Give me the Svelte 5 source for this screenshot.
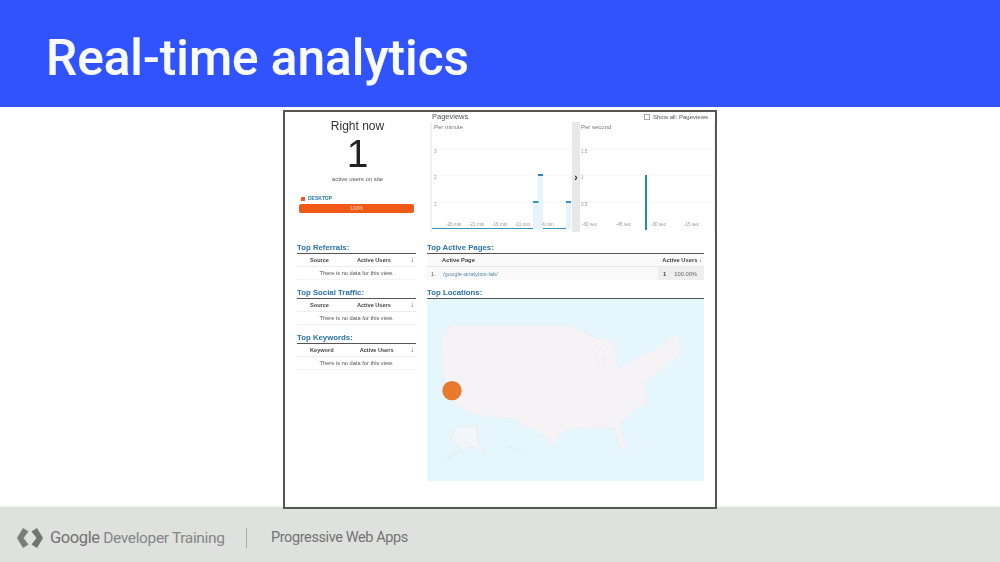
<script>
  const tables = [
    { title: 'Top Referrals:', col: 'Source', gap: 28 },
    { title: 'Top Social Traffic:', col: 'Source', gap: 28 },
    { title: 'Top Keywords:', col: 'Keyword', gap: 26 }
  ];
  const minuteGrid = [{ y: 27, l: '3' }, { y: 53, l: '2' }, { y: 80, l: '1' }];
  const minuteTicks = [[14, '-26 min'], [37, '-21 min'], [60, '-16 min'], [83, '-11 min'], [109, '-6 min']];
  const secondGrid = [{ y: 27, l: '1.5' }, { y: 53, l: '1' }, { y: 80, l: '0.5' }];
  const secondTicks = [[2, '-60 sec'], [36, '-45 sec'], [71, '-30 sec'], [104, '-15 sec']];
</script>

<div class="slide">
  <header class="banner"><h1>Real-time analytics</h1></header>

  <main class="stage">
    <div class="shot">
      <section class="top">
        <div class="now">
          <div class="now-title">Right now</div>
          <div class="now-count">1</div>
          <div class="now-sub">active users on site</div>
          <div class="device"><i></i>DESKTOP</div>
          <div class="bar">100%</div>
        </div>
        <div class="views">
          <div class="views-head">
            <span>Pageviews</span>
            <span class="show"><i></i>Show all: Pageviews</span>
          </div>
          <div class="charts">
            <svg class="minute" viewBox="0 0 140 110">
              <rect width="140" height="110" fill="#fff" />
              <text x="2" y="7" class="cap">Per minute</text>
              {#each minuteGrid as g}
                <line x1="0" x2="140" y1={g.y} y2={g.y} stroke="#f0f0f0" stroke-width="0.7" />
                <text x="2" y={g.y + 4} class="tick">{g.l}</text>
              {/each}
              <rect x="101" y="80" width="5" height="27" fill="#e6f4fb" />
              <rect x="106" y="53" width="5" height="54" fill="#e6f4fb" />
              <rect x="134" y="80" width="5" height="27" fill="#e6f4fb" />
              <rect x="101" y="79" width="5.500" height="2" fill="#3a93bd" />
              <rect x="106" y="52" width="5" height="2" fill="#2c86b2" />
              <rect x="134" y="79" width="5" height="2" fill="#3a93bd" />
              <rect x="0" y="106" width="101" height="1" fill="#3a93bd" />
              <rect x="111" y="106" width="23" height="1" fill="#3a93bd" />
              {#each minuteTicks as [x, l]}
                <text x={x} y="104" class="tick">{l}</text>
              {/each}
            </svg>
            <div class="divider"><span>›</span></div>
            <svg class="second" viewBox="0 0 134 110">
              <rect width="134" height="110" fill="#fff" />
              <text x="1" y="7" class="cap">Per second</text>
              {#each secondGrid as g}
                <line x1="0" x2="134" y1={g.y} y2={g.y} stroke="#f0f0f0" stroke-width="0.7" />
                <text x="1" y={g.y + 4} class="tick">{g.l}</text>
              {/each}
              <rect x="65" y="53" width="2" height="55" fill="#1f8f9d" />
              {#each secondTicks as [x, l]}
                <text x={x} y="104" class="tick">{l}</text>
              {/each}
            </svg>
          </div>
        </div>
      </section>

      <section class="bottom">
        <div class="left">
          {#each tables as t}
            <div class="tbl">
              <h2>{t.title}</h2>
              <div class="tbl-head">
                <span>{t.col}</span>
                <span style="margin-left: {t.gap}px">Active Users</span>
                <span class="arrow">↓</span>
              </div>
              <div class="tbl-empty">There is no data for this view.</div>
            </div>
          {/each}
        </div>
        <div class="right">
          <h2>Top Active Pages:</h2>
          <div class="pages-head">
            <span>Active Page</span>
            <span>Active Users ↓</span>
          </div>
          <div class="pages-row">
            <span class="idx">1.</span>
            <span class="link">/google-analytics-lab/</span>
            <span class="val"><b>1</b>100.00%</span>
          </div>
          <h2 class="loc">Top Locations:</h2>
          <svg class="map" viewBox="6 9 831 546">
            <rect x="6" y="9" width="831" height="546" fill="#e6f6fd" />
            <path
              d="M72 88 L430 88 L470 105 L510 125 L555 130 L575 165 L580 215 L620 195 L660 175 L700 160 L730 130 L760 115 L768 165 L730 205 L690 240 L655 260 L665 320 L620 345 L585 385 L606 460 L590 462 L570 395 L500 395 L430 400 L395 420 L385 450 L360 425 L330 395 L300 400 L280 370 L210 365 L130 350 L80 310 L55 240 L50 130 Z"
              fill="#f6f3f6" stroke="#eceef2" stroke-width="2" stroke-linejoin="round"
            />
            <path d="M530 150 L514 180 L518 205 L534 218 L540 170 M470 105 L510 125" fill="none" stroke="#e4e8ec" stroke-width="2" />
            <path
              d="M95 395 L155 385 L160 445 L185 475 L140 450 L100 470 L60 490 L110 460 L75 430 Z"
              fill="#f2f5f9" stroke="#e2e8ec" stroke-width="2" stroke-linejoin="round"
            />
            <path d="M240 450 L285 462 L330 495" fill="none" stroke="#e0eef4" stroke-width="2" />
            <circle cx="81" cy="284" r="29" fill="#e9792d" />
          </svg>
        </div>
      </section>
    </div>
  </main>

  <footer class="foot">
    <svg class="logo" viewBox="0 0 26 20">
      <path d="M0 10 L6 0 L11.500 3.500 L6.500 10 L11.500 16.500 L6 20 Z" fill="#7b7d7b" />
      <path d="M26 10 L20 0 L14.500 3.500 L19.500 10 L14.500 16.500 L20 20 Z" fill="#737573" />
    </svg>
    <span class="brand"><span class="g">Google</span> Developer Training</span>
    <span class="sep"></span>
    <span class="course">Progressive Web Apps</span>
  </footer>
</div>

<style>
  :global(body) { margin: 0; background: #fff; }
  .slide {
    width: 1000px; height: 562px; display: flex; flex-direction: column;
    overflow: hidden; font-family: "Liberation Sans", Arial, sans-serif; color: #333;
  }
  .banner {
    height: 107px; flex: none; background: #3053fe; display: flex; align-items: center;
    padding: 10px 0 0 46px; box-sizing: border-box;
  }
  h1 {
    margin: 0; color: #f8fbff; font: 500 49.500px/1 Roboto, sans-serif;
    -webkit-text-stroke: 0.15px #f8fbff;
  }
  .stage { flex: 1; display: flex; justify-content: center; padding-top: 3px; min-height: 0; }
  .shot {
    width: 434px; height: 399px; box-sizing: border-box; border: 2px solid #565656; background: #fff;
    display: flex; flex-direction: column; filter: blur(0.35px);
  }
  .top { display: flex; height: 124px; flex: none; }
  .now { width: 145px; flex: none; box-sizing: border-box; padding: 7px 12px 0; text-align: center; }
  .now-title { font-size: 12px; line-height: 15px; color: #333; }
  .now-count { font-size: 39px; line-height: 38px; color: #222; margin-top: 1px; }
  .now-sub { font-size: 6px; line-height: 8px; color: #555; margin-top: 2px; }
  .device {
    display: flex; align-items: center; gap: 3px; font-size: 5px; font-weight: 700; color: #2a7ab0;
    margin: 12px 0 2px 4px; line-height: 7px;
  }
  .device i { width: 4px; height: 4px; background: #ea5a1e; }
  .bar {
    width: 115px; height: 9px; background: #f05a16; border-radius: 2px; margin-left: 2px;
    color: #ffd9c5; font-size: 5px; line-height: 9px; text-align: center;
  }
  .views { flex: 1; min-width: 0; padding-left: 0; }
  .views-head {
    display: flex; justify-content: space-between; align-items: center; height: 9px;
    font-size: 7.500px; color: #555; padding: 0 7px 1px 2px;
  }
  .show { display: flex; align-items: center; gap: 3px; font-size: 6px; }
  .show i { width: 4px; height: 4px; border: 0.5px solid #aaa; }
  .charts { display: flex; height: 110px; background: #f1f1f1; padding: 0 1px 0 2px; }
  .charts svg { display: block; height: 110px; flex: none; }
  .minute { width: 140px; }
  .second { width: 134px; }
  .divider {
    width: 8px; flex: none; background: #e8e8e8; display: flex; align-items: center; justify-content: center;
    font-size: 10px; font-weight: 700; color: #222;
  }
  .cap { font: 6px "Liberation Sans", sans-serif; fill: #777; }
  .tick { font: 4.600px "Liberation Sans", sans-serif; fill: #999; }
  .bottom { display: flex; flex: 1; padding: 0 0 0 12px; gap: 11px; min-height: 0; }
  .left { width: 119px; flex: none; display: flex; flex-direction: column; gap: 8px; padding-top: 7px; }
  .right { width: 277px; flex: none; padding-top: 7px; }
  h2 {
    margin: 0; font-size: 7.800px; line-height: 9px; font-weight: 700; color: #2a72a8;
    padding-bottom: 1px; border-bottom: 1px solid #555;
  }
  .tbl-head {
    display: flex; height: 12px; align-items: center; font-size: 5.600px; font-weight: 700; color: #444;
    border-bottom: 1px solid #eee; padding-left: 13px;
  }
  .tbl-head .arrow { margin-left: auto; margin-right: 2px; font-size: 8px; line-height: 10px; font-weight: 400; color: #666; }
  .tbl-empty {
    height: 12px; line-height: 12px; font-size: 5.700px; color: #555; text-align: center;
    border-bottom: 1px solid #f3f3f3;
  }
  .pages-head {
    display: flex; justify-content: space-between; align-items: center; height: 12px; padding: 0 2px 0 15px;
    font-size: 5.800px; font-weight: 700; color: #444; background: #fafafa; border-bottom: 1px solid #e6e6e6;
  }
  .pages-row {
    display: flex; align-items: center; height: 13px; font-size: 5.800px; color: #666; padding-left: 4px;
    background: #f9f9f9;
  }
  .idx { width: 12px; }
  .link { color: #5a8ab5; }
  .val {
    margin-left: auto; width: 46px; height: 13px; background: #eeeeee; display: flex; align-items: center;
    gap: 8px; padding-left: 5px; box-sizing: border-box;
  }
  .val b { font-weight: 700; color: #444; }
  .loc { margin-top: 8px; }
  .map { display: block; width: 277px; height: 182px; filter: blur(0.6px); }
  .foot {
    height: 55px; flex: none; background: #dfe1df; display: flex; align-items: center; padding-left: 17px;
    box-sizing: border-box; box-shadow: 0 -1px 2px rgba(0,0,0,.06); color: #777; padding-top: 7px;
  }
  .logo { width: 26px; height: 20px; flex: none; margin-right: 7px; }
  .brand { font: 400 15.500px/20px Roboto, sans-serif; color: #858785; width: 196px; white-space: nowrap; letter-spacing: -0.35px; }
  .g { color: #727472; font-size: 16.500px; letter-spacing: -0.4px; }
  .sep { width: 1px; height: 20px; background: #a9aba9; flex: none; margin-right: 24px; }
  .course { font: 400 14.500px/20px Roboto, sans-serif; color: #727472; letter-spacing: -0.4px; white-space: nowrap; }
</style>
